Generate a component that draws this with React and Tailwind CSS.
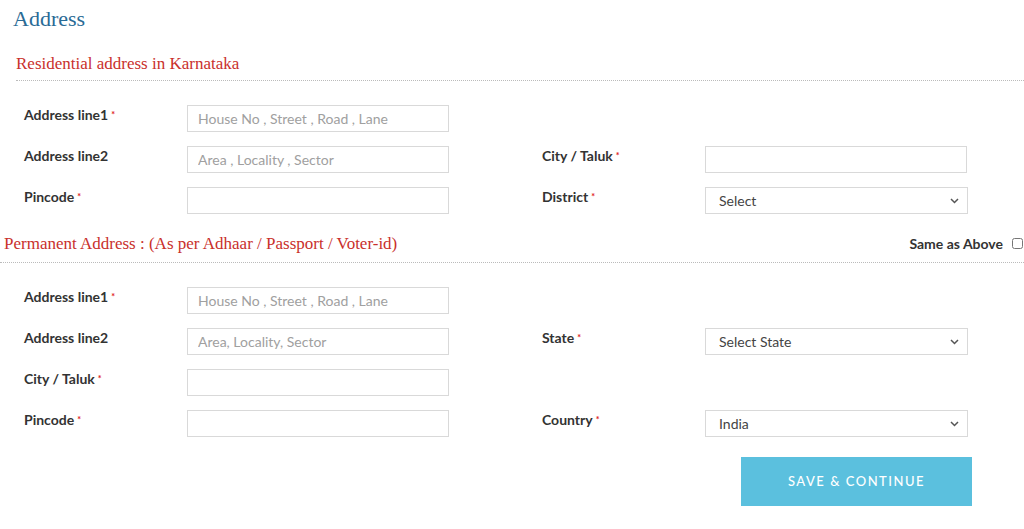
import React from 'react';

const Label = ({ text, required }) => (
    <div className="w-[163px] shrink-0 pt-[1px] text-[14px] font-bold text-[#333] leading-[18px]">
        {text}
        {required && <span className="text-[#e02020] text-[9px] align-top ml-[3px]">*</span>}
    </div>
);

const TextInput = ({ placeholder }) => (
    <input
        type="text"
        placeholder={placeholder}
        className="w-[262px] h-[27px] border border-[#d9d9d9] px-[10px] text-[14px] text-[#555] placeholder:text-[#a0a0a0] outline-none"
    />
);

const SelectInput = ({ value }) => (
    <div className="relative w-[263px] h-[27px]">
        <select
            defaultValue={value}
            className="appearance-none w-full h-full border border-[#d9d9d9] bg-white pl-[13px] text-[14px] text-[#444] outline-none"
        >
            <option>{value}</option>
        </select>
        <svg className="absolute right-[9px] top-[11px] pointer-events-none" width="9" height="6" viewBox="0 0 9 6">
            <path d="M1 1l3.5 3.5L8 1" fill="none" stroke="#555" strokeWidth="1.5" />
        </svg>
    </div>
);

const Field = ({ label, required, children }) => (
    <div className="flex w-[518px]">
        <Label text={label} required={required} />
        {children}
    </div>
);

const Row = ({ left, right }) => (
    <div className="flex h-[41px] pl-[24px]">
        <div className="w-[518px]">{left}</div>
        <div className="w-[430px]">{right}</div>
    </div>
);

export default function App() {
    return (
        <div className="w-[1024px] h-[529px] bg-white overflow-hidden" style={{ fontFamily: 'Lato, "Open Sans", sans-serif' }}>
            <h1 className="pl-[13px] pt-[6px] text-[22px] leading-[26px] text-[#2a6b96]" style={{ fontFamily: '"Liberation Serif", serif' }}>
                Address
            </h1>
            <div className="ml-[16px] mt-[22px] pb-[6px] border-b border-dotted border-[#bbb]">
                <h2 className="text-[17px] leading-[20px] text-[#c9302c]" style={{ fontFamily: '"Liberation Serif", serif' }}>
                    Residential address in Karnataka
                </h2>
            </div>

            <div className="pt-[24px]">
                <Row
                    left={<Field label="Address line1" required><TextInput placeholder="House No , Street , Road , Lane" /></Field>}
                />
                <Row
                    left={<Field label="Address line2"><TextInput placeholder="Area , Locality , Sector" /></Field>}
                    right={<Field label="City / Taluk" required><TextInput /></Field>}
                />
                <Row
                    left={<Field label="Pincode" required><TextInput /></Field>}
                    right={<Field label="District" required><SelectInput value="Select" /></Field>}
                />
            </div>

            <div className="flex items-end justify-between pl-[4px] pr-[1px] pb-[8px] mt-[5px] border-b border-dotted border-[#bbb]">
                <h2 className="text-[17px] leading-[20px] text-[#c9302c]" style={{ fontFamily: '"Liberation Serif", serif' }}>
                    Permanent Address : (As per Adhaar / Passport / Voter-id)
                </h2>
                <label className="flex items-center gap-[9px] text-[14px] font-bold text-[#333]">
                    Same as Above
                    <input type="checkbox" className="w-[11px] h-[11px]" />
                </label>
            </div>

            <div className="pt-[24px]">
                <Row
                    left={<Field label="Address line1" required><TextInput placeholder="House No , Street , Road , Lane" /></Field>}
                />
                <Row
                    left={<Field label="Address line2"><TextInput placeholder="Area, Locality, Sector" /></Field>}
                    right={<Field label="State" required><SelectInput value="Select State" /></Field>}
                />
                <Row
                    left={<Field label="City / Taluk" required><TextInput /></Field>}
                />
                <Row
                    left={<Field label="Pincode" required><TextInput /></Field>}
                    right={<Field label="Country" required><SelectInput value="India" /></Field>}
                />
            </div>

            <div className="flex pl-[741px] pt-[6px]">
                <button className="w-[231px] h-[49px] bg-[#5bc0de] text-white text-[13px] tracking-[1.5px] font-medium">
                    SAVE &amp; CONTINUE
                </button>
            </div>
        </div>
    );
}
